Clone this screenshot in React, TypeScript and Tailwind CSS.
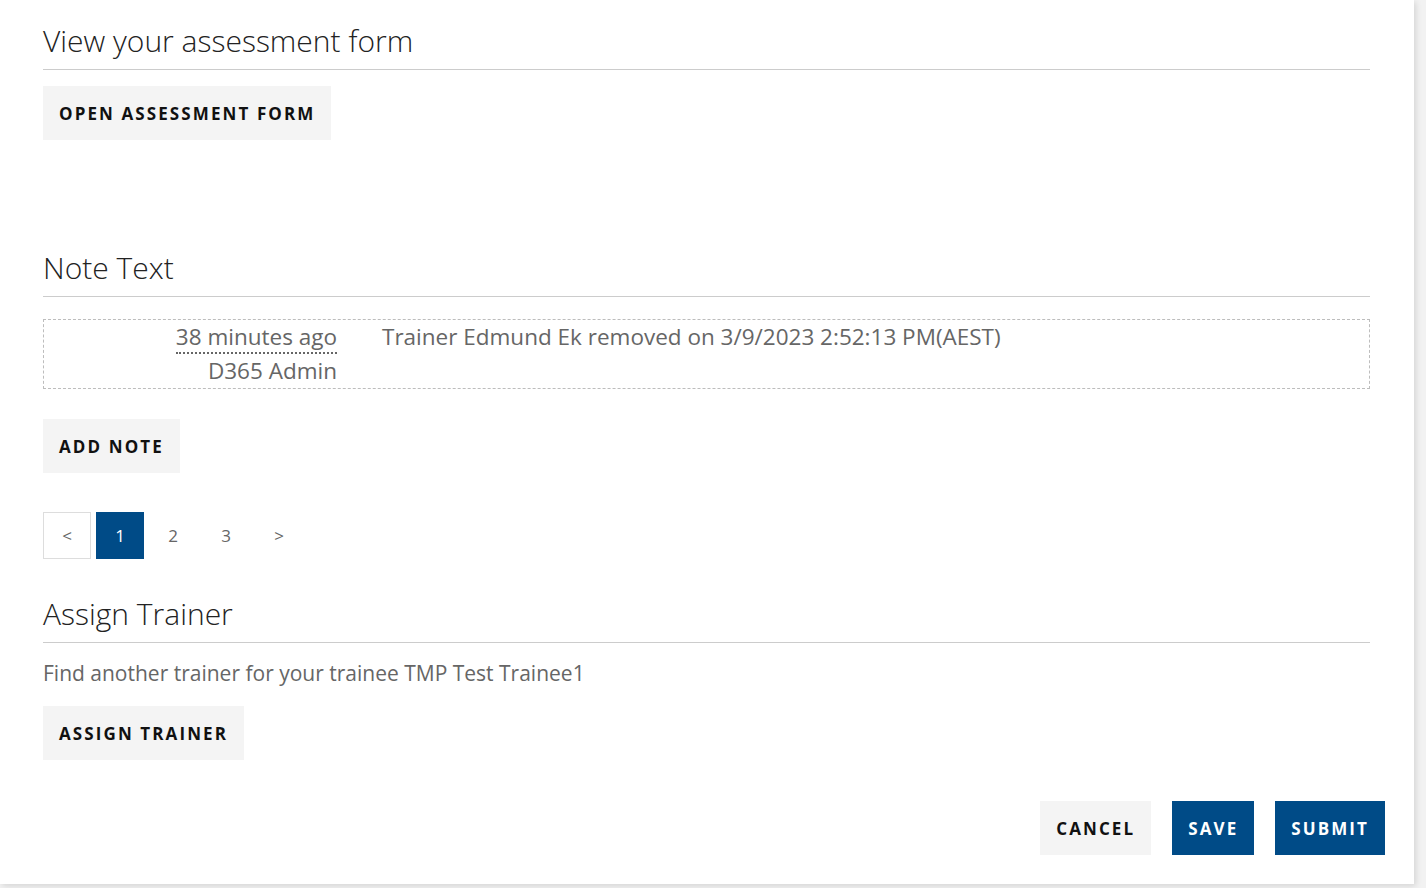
import React from "react";

const font = { fontFamily: "'Open Sans', 'Noto Sans', sans-serif" };

function GrayButton({ children }: { children: React.ReactNode }) {
  return (
    <button className="h-[54px] px-4 bg-[#f4f4f4] text-[#111] font-bold text-[17px] tracking-[2.1px] uppercase leading-none">
      {children}
    </button>
  );
}

function BlueButton({ children }: { children: React.ReactNode }) {
  return (
    <button className="h-[54px] px-4 bg-[#004b87] text-white font-bold text-[17px] tracking-[2.1px] uppercase leading-none">
      {children}
    </button>
  );
}

function Heading({ children }: { children: React.ReactNode }) {
  return (
    <div>
      <h2 className="text-[30px] leading-[40px] font-light text-[#222]">{children}</h2>
      <div className="mt-2 h-px bg-[#cccccc]" />
    </div>
  );
}

export default function App() {
  return (
    <div className="w-[1426px] h-[888px] bg-[#f2f2f2] overflow-hidden" style={font}>
      <div className="w-[1414px] h-[884px] bg-white shadow-[2px_2px_6px_rgba(0,0,0,0.12)] pl-[43px] pr-[44px] pt-[21px]">
        <Heading>View your assessment form</Heading>
        <div className="mt-4">
          <GrayButton>Open Assessment Form</GrayButton>
        </div>

        <div className="mt-[108px]">
          <Heading>Note Text</Heading>
        </div>

        <div className="mt-[22px] border border-dashed border-[#bdbdbd] h-[70px] pt-[2px] flex text-[22.5px] text-[#666]">
          <div className="w-[293px] text-right flex flex-col">
            <span className="leading-[30px]">
              <abbr className="no-underline border-b-2 border-dotted border-[#666]" title="3/9/2023 2:52:13 PM">38 minutes ago</abbr>
            </span>
            <span className="leading-[30px] mt-[4px]">D365 Admin</span>
          </div>
          <div className="ml-[45px] leading-[30px]">
            Trainer Edmund Ek removed on 3/9/2023 2:52:13 PM(AEST)
          </div>
        </div>

        <div className="mt-[30px]">
          <GrayButton>Add Note</GrayButton>
        </div>

        <div className="mt-[39px] flex gap-[5px] text-[17px] text-[#666]">
          <div className="w-[48px] h-[47px] border border-[#dddddd] flex items-center justify-center">&lt;</div>
          <div className="w-[48px] h-[47px] bg-[#004b87] text-white flex items-center justify-center">1</div>
          <div className="w-[48px] h-[47px] flex items-center justify-center">2</div>
          <div className="w-[48px] h-[47px] flex items-center justify-center">3</div>
          <div className="w-[48px] h-[47px] flex items-center justify-center">&gt;</div>
        </div>

        <div className="mt-[35px]">
          <Heading>Assign Trainer</Heading>
        </div>
        <p className="mt-[17px] text-[21px] leading-[27px] text-[#666]">
          Find another trainer for your trainee TMP Test Trainee1
        </p>
        <div className="mt-[19px]">
          <GrayButton>Assign Trainer</GrayButton>
        </div>

        <div className="mt-[41px] mr-[-15px] flex justify-end gap-[21px]">
          <GrayButton>Cancel</GrayButton>
          <BlueButton>Save</BlueButton>
          <BlueButton>Submit</BlueButton>
        </div>
      </div>
    </div>
  );
}
